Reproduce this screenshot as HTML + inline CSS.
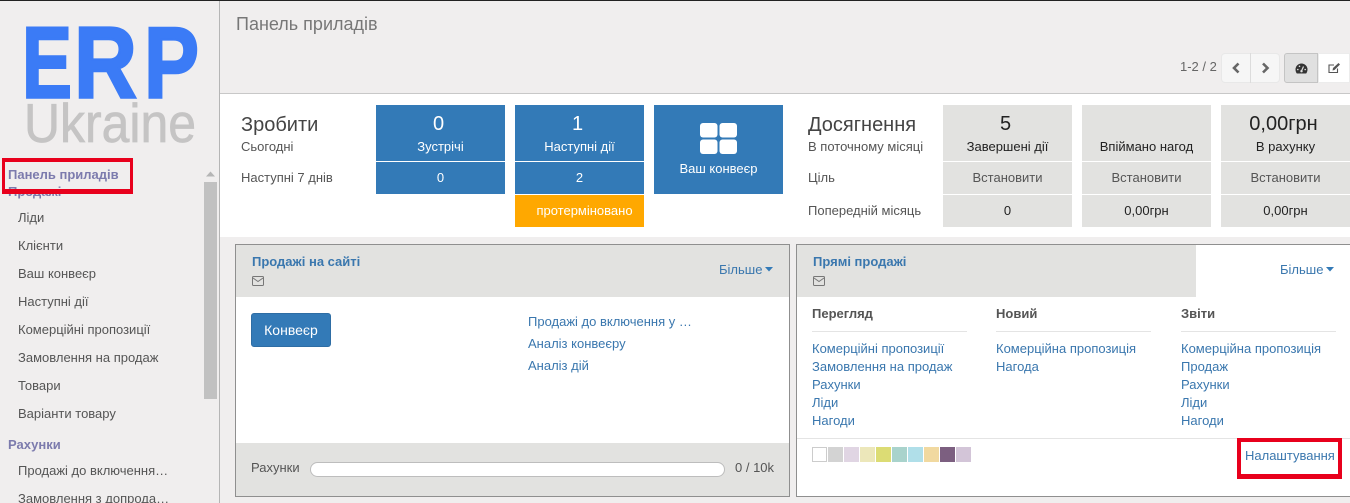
<!DOCTYPE html>
<html><head><meta charset="utf-8">
<style>
html,body{margin:0;padding:0;width:1350px;height:503px;overflow:hidden;background:#f0eeee}
body{position:relative;font-family:"Liberation Sans",Arial,sans-serif;font-size:13px;color:#4c4c4c}
.a{position:absolute;box-sizing:border-box}
.t{position:absolute;line-height:18px;height:18px;white-space:nowrap;margin-top:1px}
.c{text-align:center}
.m{color:#555;left:18px}
.h{color:#7c7bad;font-weight:bold;left:8px}
.b{background:#337ab7}
.g{background:#e2e2e0}
.w{color:#fff}
.l{color:#3a77ae}
.k{color:#222}
.s{color:#555}
.sw{position:absolute;top:447px;width:15px;height:15px}
</style></head>
<body>
<div class="a" style="left:0;top:0;width:1350px;height:1px;background:#222"></div>

<!-- Sidebar -->
<div class="a" style="left:0;top:1px;width:219px;height:502px;background:#f0eeee"></div>
<div class="a" style="left:219px;top:1px;width:1px;height:502px;background:#b5b5b5"></div>
<svg class="a" style="left:0;top:0" width="219" height="150">
<g font-family="Liberation Sans" font-weight="bold" font-size="101" fill="#3b7bf6" stroke="#3b7bf6" stroke-width="2.500">
<text x="22" y="97.500" textLength="50" lengthAdjust="spacingAndGlyphs">E</text>
<text x="74" y="97.500" textLength="63" lengthAdjust="spacingAndGlyphs">R</text>
<text x="144" y="97.500" textLength="55" lengthAdjust="spacingAndGlyphs">P</text>
</g>
<text x="24" y="142" font-family="Liberation Sans" font-size="55" fill="#c5c4c4" stroke="#c5c4c4" stroke-width=".7" textLength="172" lengthAdjust="spacingAndGlyphs">Ukraine</text>
</svg>
<span class="t h" style="top:182px">Продажі</span>
<span class="t h" style="top:165px">Панель приладів</span>
<span class="t m" style="top:208px">Ліди</span>
<span class="t m" style="top:236px">Клієнти</span>
<span class="t m" style="top:264px">Ваш конвеєр</span>
<span class="t m" style="top:292px">Наступні дії</span>
<span class="t m" style="top:320px">Комерційні пропозиції</span>
<span class="t m" style="top:348px">Замовлення на продаж</span>
<span class="t m" style="top:376px">Товари</span>
<span class="t m" style="top:404px">Варіанти товару</span>
<span class="t h" style="top:435px">Рахунки</span>
<span class="t m" style="top:461px">Продажі до включення…</span>
<span class="t m" style="top:489px">Замовлення з допрода…</span>
<div class="a" style="left:204px;top:182px;width:13px;height:217px;background:#c1c1c1"></div>
<svg class="a" style="left:205px;top:170px" width="11" height="8"><path d="M1 6.500L5.500 1.500L10 6.500Z" fill="#b5b5b5"/></svg>
<div class="a" style="left:2px;top:158px;width:131px;height:36px;border:solid #e8001c;border-width:4px 3px 5px 3px"></div>

<!-- Header -->
<div class="a" style="left:220px;top:93px;width:1130px;height:1px;background:#c8c8c8"></div>
<span class="t" style="left:236px;top:14px;font-size:18px;color:#777">Панель приладів</span>
<span class="t" style="left:1180px;top:57px;color:#666">1-2 / 2</span>
<div class="a" style="left:1221px;top:53px;width:59px;height:30px;background:#f6f6f6;border:1px solid #e8e8e8;border-radius:4px"></div>
<div class="a" style="left:1250px;top:53px;width:1px;height:30px;background:#dcdcdc"></div>
<svg class="a" style="left:1221px;top:53px" width="59" height="30"><path d="M17.500 10.500L13 15L17.500 19.500M42 10.500L46.500 15L42 19.500" fill="none" stroke="#666" stroke-width="2.600"/></svg>
<div class="a" style="left:1284px;top:53px;width:34px;height:30px;background:#e0e0e0;border:1px solid #c4c4c4;border-radius:3px 0 0 3px"></div>
<div class="a" style="left:1318px;top:53px;width:32px;height:30px;background:#fff;border:1px solid #ececec"></div>
<svg class="a" style="left:1295px;top:63px" width="13" height="11"><path d="M6.500 0.500A6 6 0 0 0 0.500 6.500C0.500 8 1 9.300 1.800 10.500H11.200C12 9.300 12.500 8 12.500 6.500A6 6 0 0 0 6.500 0.500Z" fill="#333"/><path d="M6.500 8L8.500 3.500" stroke="#e0e0e0" stroke-width="1.200"/><circle cx="6.500" cy="8.200" r="1.200" fill="#e0e0e0"/><circle cx="2.800" cy="6.500" r=".8" fill="#e0e0e0"/><circle cx="4.500" cy="3.300" r=".8" fill="#e0e0e0"/><circle cx="10.200" cy="6.500" r=".8" fill="#e0e0e0"/></svg>
<svg class="a" style="left:1328px;top:62px" width="13" height="12"><path d="M9.500 6.500V10.500H1V3H6" fill="none" stroke="#555" stroke-width="1.100"/><path d="M4.500 8.500L5 6L10.500 1L12 2.500L6.500 8Z" fill="#555"/></svg>

<!-- Dashboard band -->
<div class="a" style="left:220px;top:94px;width:1130px;height:143px;background:#fff"></div>
<span class="t" style="left:241px;top:115px;font-size:20px;color:#444">Зробити</span>
<span class="t s" style="left:241px;top:137px">Сьогодні</span>
<span class="t s" style="left:241px;top:168px">Наступні 7 днів</span>

<div class="a b" style="left:376px;top:105px;width:129px;height:56px"></div>
<div class="a b" style="left:376px;top:162px;width:129px;height:32px"></div>
<div class="a b" style="left:515px;top:105px;width:129px;height:56px"></div>
<div class="a b" style="left:515px;top:162px;width:129px;height:32px"></div>
<div class="a" style="left:515px;top:195px;width:129px;height:32px;background:#ffa800"></div>
<div class="a b" style="left:654px;top:105px;width:129px;height:89px"></div>

<span class="t c w" style="left:374px;width:129px;top:114px;font-size:20px">0</span>
<span class="t c w" style="left:376px;width:129px;top:137px">Зустрічі</span>
<span class="t c w" style="left:376px;width:129px;top:168px">0</span>
<span class="t c w" style="left:513px;width:129px;top:114px;font-size:20px">1</span>
<span class="t c w" style="left:515px;width:129px;top:137px">Наступні дії</span>
<span class="t c w" style="left:515px;width:129px;top:168px">2</span>
<span class="t c w" style="left:515px;width:129px;top:201px;padding-left:10px;box-sizing:border-box">протерміновано</span>
<span class="t c w" style="left:654px;width:129px;top:159px">Ваш конвеєр</span>
<svg class="a" style="left:700px;top:123px" width="37" height="31"><rect width="17.500" height="14.500" rx="3" fill="#fff"/><rect x="19.500" width="17.500" height="14.500" rx="3" fill="#fff"/><rect y="16.500" width="17.500" height="14.500" rx="3" fill="#fff"/><rect x="19.500" y="16.500" width="17.500" height="14.500" rx="3" fill="#fff"/></svg>

<span class="t" style="left:808px;top:115px;font-size:20px;color:#444">Досягнення</span>
<span class="t s" style="left:808px;top:137px">В поточному місяці</span>
<span class="t s" style="left:808px;top:168px">Ціль</span>
<span class="t s" style="left:808px;top:201px">Попередній місяць</span>

<div class="a g" style="left:943px;top:105px;width:129px;height:56px"></div>
<div class="a g" style="left:943px;top:162px;width:129px;height:32px"></div>
<div class="a g" style="left:943px;top:195px;width:129px;height:32px"></div>
<div class="a g" style="left:1082px;top:105px;width:129px;height:56px"></div>
<div class="a g" style="left:1082px;top:162px;width:129px;height:32px"></div>
<div class="a g" style="left:1082px;top:195px;width:129px;height:32px"></div>
<div class="a g" style="left:1221px;top:105px;width:129px;height:56px"></div>
<div class="a g" style="left:1221px;top:162px;width:129px;height:32px"></div>
<div class="a g" style="left:1221px;top:195px;width:129px;height:32px"></div>

<span class="t c k" style="left:941px;width:129px;top:114px;font-size:20px">5</span>
<span class="t c k" style="left:943px;width:129px;top:137px">Завершені дії</span>
<span class="t c s" style="left:943px;width:129px;top:168px">Встановити</span>
<span class="t c k" style="left:943px;width:129px;top:201px">0</span>
<span class="t c k" style="left:1082px;width:129px;top:137px">Впіймано нагод</span>
<span class="t c s" style="left:1082px;width:129px;top:168px">Встановити</span>
<span class="t c k" style="left:1082px;width:129px;top:201px">0,00грн</span>
<span class="t c k" style="left:1219px;width:129px;top:114px;font-size:20px">0,00грн</span>
<span class="t c k" style="left:1221px;width:129px;top:137px">В рахунку</span>
<span class="t c s" style="left:1221px;width:129px;top:168px">Встановити</span>
<span class="t c k" style="left:1221px;width:129px;top:201px">0,00грн</span>

<!-- Card 1 -->
<div class="a" style="left:235px;top:244px;width:555px;height:253px;background:#fff;border:1px solid #8f8f8f"></div>
<div class="a g" style="left:236px;top:245px;width:553px;height:52px"></div>
<div class="a g" style="left:236px;top:443px;width:553px;height:53px"></div>
<span class="t l" style="left:252px;top:252px;font-weight:bold">Продажі на сайті</span>
<svg class="a" style="left:252px;top:276px" width="12" height="10"><rect x=".5" y=".5" width="11" height="9" rx="1" fill="none" stroke="#777"/><path d="M1 2L6 5.500L11 2" fill="none" stroke="#777"/></svg>
<span class="t l" style="left:719px;top:260px">Більше</span>
<svg class="a" style="left:765px;top:267px" width="9" height="5"><path d="M0 0H8L4 4.500Z" fill="#337ab7"/></svg>
<div class="a b" style="left:251px;top:313px;width:80px;height:34px;border:1px solid #2e6da4;border-radius:3px;color:#fff;text-align:center;line-height:32px;font-size:14px">Конвеєр</div>
<span class="t l" style="left:528px;top:312px">Продажі до включення у …</span>
<span class="t l" style="left:528px;top:334px">Аналіз конвеєру</span>
<span class="t l" style="left:528px;top:356px">Аналіз дій</span>
<span class="t s" style="left:251px;top:458px">Рахунки</span>
<div class="a" style="left:310px;top:462px;width:415px;height:15px;background:#fff;border:1px solid #bdbdbd;border-radius:8px"></div>
<span class="t s" style="left:735px;top:458px">0 / 10k</span>

<!-- Card 2 -->
<div class="a" style="left:796px;top:244px;width:560px;height:253px;background:#fff;border:1px solid #8f8f8f"></div>
<div class="a g" style="left:797px;top:245px;width:399px;height:52px"></div>
<span class="t l" style="left:813px;top:252px;font-weight:bold">Прямі продажі</span>
<svg class="a" style="left:813px;top:276px" width="12" height="10"><rect x=".5" y=".5" width="11" height="9" rx="1" fill="none" stroke="#777"/><path d="M1 2L6 5.500L11 2" fill="none" stroke="#777"/></svg>
<span class="t l" style="left:1280px;top:260px">Більше</span>
<svg class="a" style="left:1326px;top:267px" width="9" height="5"><path d="M0 0H8L4 4.500Z" fill="#337ab7"/></svg>

<span class="t" style="left:812px;top:304px;font-weight:bold;color:#555">Перегляд</span>
<span class="t" style="left:996px;top:304px;font-weight:bold;color:#555">Новий</span>
<span class="t" style="left:1181px;top:304px;font-weight:bold;color:#555">Звіти</span>
<div class="a" style="left:812px;top:331px;width:155px;height:1px;background:#e4e4e4"></div>
<div class="a" style="left:996px;top:331px;width:155px;height:1px;background:#e4e4e4"></div>
<div class="a" style="left:1181px;top:331px;width:155px;height:1px;background:#e4e4e4"></div>

<span class="t l" style="left:812px;top:339px">Комерційні пропозиції</span>
<span class="t l" style="left:812px;top:357px">Замовлення на продаж</span>
<span class="t l" style="left:812px;top:375px">Рахунки</span>
<span class="t l" style="left:812px;top:393px">Ліди</span>
<span class="t l" style="left:812px;top:411px">Нагоди</span>
<span class="t l" style="left:996px;top:339px">Комерційна пропозиція</span>
<span class="t l" style="left:996px;top:357px">Нагода</span>
<span class="t l" style="left:1181px;top:339px">Комерційна пропозиція</span>
<span class="t l" style="left:1181px;top:357px">Продаж</span>
<span class="t l" style="left:1181px;top:375px">Рахунки</span>
<span class="t l" style="left:1181px;top:393px">Ліди</span>
<span class="t l" style="left:1181px;top:411px">Нагоди</span>

<div class="a" style="left:797px;top:438px;width:553px;height:1px;background:#e4e4e4"></div>
<div class="sw" style="left:812px;background:#fff;border:1px solid #ccc;box-sizing:border-box"></div>
<div class="sw" style="left:828px;background:#d3d3d3"></div>
<div class="sw" style="left:844px;background:#e0d5e3"></div>
<div class="sw" style="left:860px;background:#ece7ba"></div>
<div class="sw" style="left:876px;background:#dcdc74"></div>
<div class="sw" style="left:892px;background:#a9d3cc"></div>
<div class="sw" style="left:908px;background:#b0dfe9"></div>
<div class="sw" style="left:924px;background:#f1d9a0"></div>
<div class="sw" style="left:940px;background:#7c5f80"></div>
<div class="sw" style="left:956px;background:#d3c5d8"></div>
<span class="t l" style="left:1245px;top:446px">Налаштування</span>
<div class="a" style="left:1237px;top:438px;width:105px;height:41px;border:solid #e8001c;border-width:4px 4px 5px 4px"></div>
</body></html>
